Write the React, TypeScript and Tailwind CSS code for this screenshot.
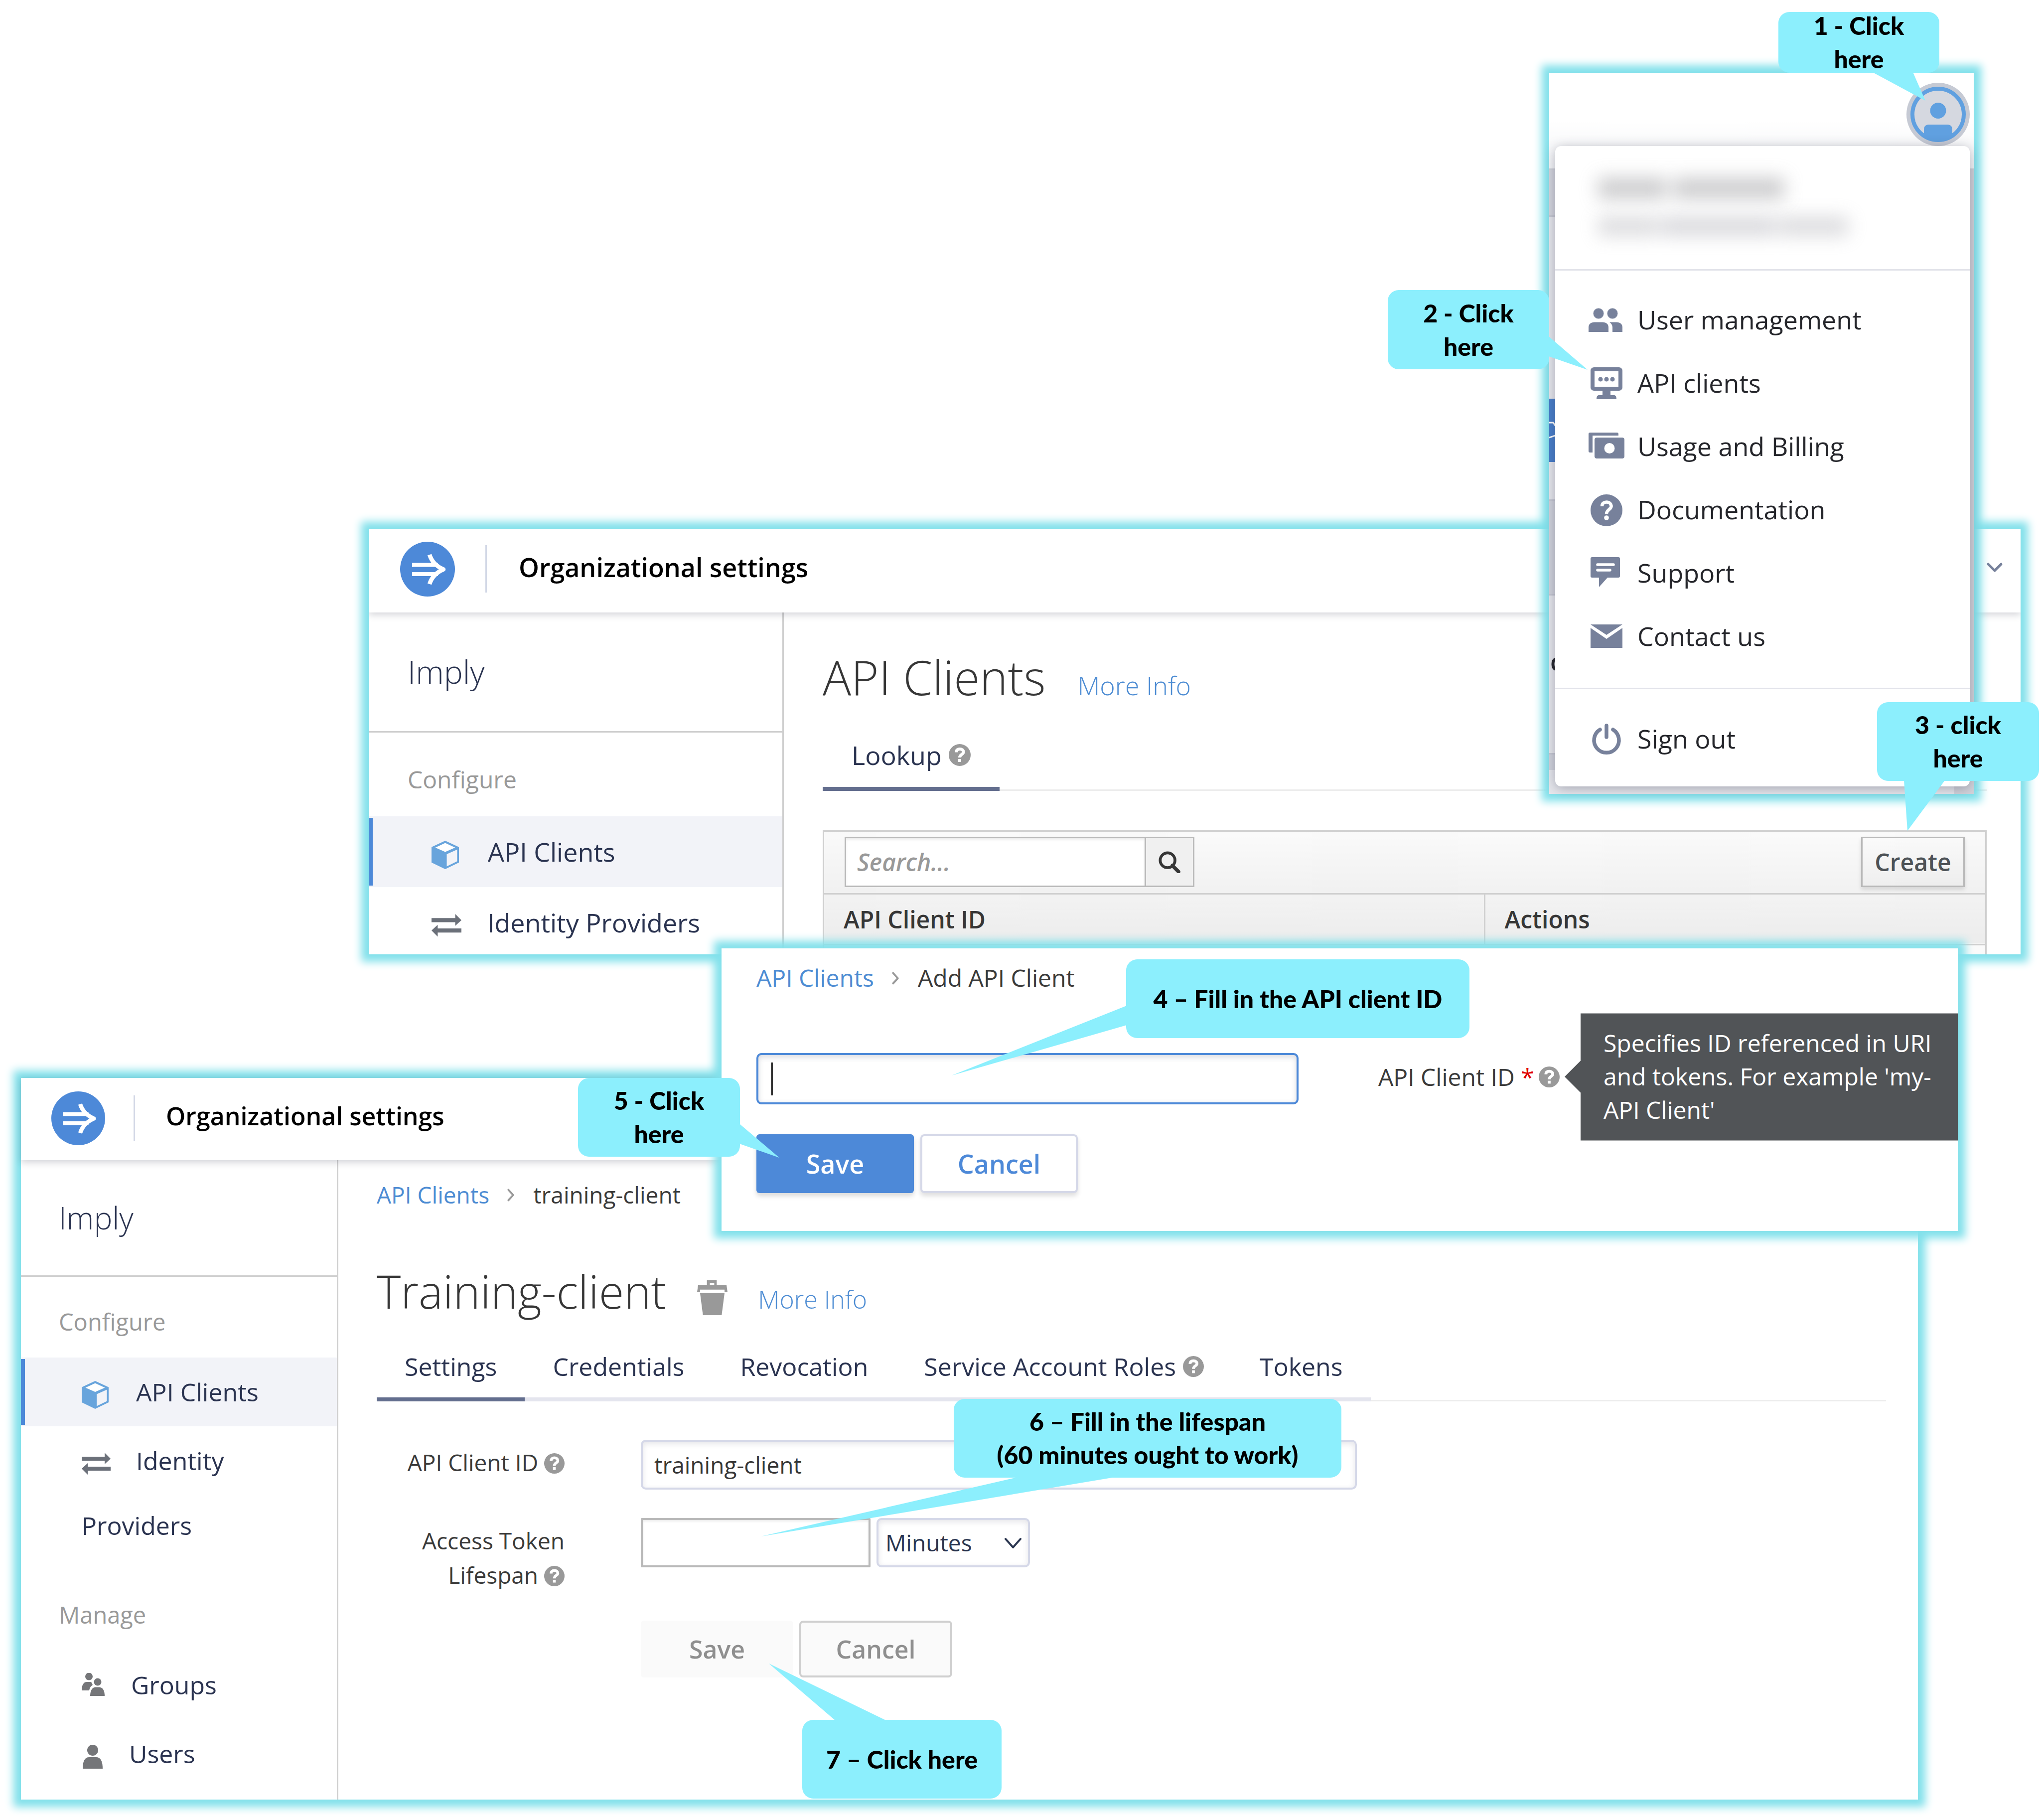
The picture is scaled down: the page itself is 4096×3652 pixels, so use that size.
import React from "react";

/* ---------- icons ---------- */

type IconProps = { className?: string };

function Logo({ className }: IconProps) {
  return (
    <svg viewBox="0 0 110 110" className={className} aria-hidden="true">
      <circle cx="55" cy="55" r="55" fill="#4d89d8" />
      <path d="M24 46.500H76M24 65H76" stroke="#fff" strokeWidth="8" fill="none" />
      <path d="M59 26C64 42 74 50 87 55.500C74 61 64 69 59 85" stroke="#fff" strokeWidth="8.500" fill="none" strokeLinejoin="round" />
    </svg>
  );
}

function CubeIcon({ className }: IconProps) {
  return (
    <svg viewBox="0 0 54 56" className={className} aria-hidden="true">
      <path d="M27 0L54 12.500V43L27 56L0 43V12.500Z" fill="#68a4dc" />
      <path d="M27 4.500L46.500 13.500L27 22L7.500 13.500Z" fill="#fff" />
      <path d="M30 26.500L50.500 17.500V40.500L30 50.500Z" fill="#f2f3f8" />
    </svg>
  );
}

function SwapIcon({ className }: IconProps) {
  return (
    <svg viewBox="0 0 58 44" className={className} aria-hidden="true">
      <path d="M0 8H46V0L58 12L46 23V16H0Z" fill="#6b7079" />
      <path d="M58 28H12V21L0 32L12 44V36H58Z" fill="#6b7079" />
    </svg>
  );
}

function GroupsIcon({ className }: IconProps) {
  return (
    <svg viewBox="0 0 46 60" className={className} aria-hidden="true">
      <g fill="#757679">
        <circle cx="14.500" cy="7" r="7.500" />
        <path d="M0 35C0 24 4 18 10 18H19L22 24C17 27 16 31 15 35Z" />
        <circle cx="32" cy="18" r="7.500" />
        <path d="M17 46C17 35 21 29.500 27 28.500H36C43 29.500 46 36 46 46Z" />
      </g>
    </svg>
  );
}

function UserIcon({ className }: IconProps) {
  return (
    <svg viewBox="0 0 40 48" className={className} aria-hidden="true">
      <g fill="#757679">
        <circle cx="20" cy="11" r="11" />
        <path d="M0 48C0 33 4 25 13 25H27C36 25 40 33 40 48Z" />
      </g>
    </svg>
  );
}

function HelpIcon({ className, fill }: IconProps & { fill: string }) {
  return (
    <svg viewBox="0 0 44 44" className={className} aria-hidden="true">
      <circle cx="22" cy="22" r="22" fill={fill} />
      <path d="M15 16.500C15 12 18 10 22 10C26.500 10 29.500 12.500 29.500 16C29.500 21 22 20.500 22 27" stroke="#fff" strokeWidth="6" fill="none" />
      <rect x="19" y="30" width="6" height="6" fill="#fff" />
    </svg>
  );
}

function TrashIcon({ className }: IconProps) {
  return (
    <svg viewBox="0 0 62 72" className={className} aria-hidden="true">
      <g fill="#999">
        <path fillRule="evenodd" d="M20 0H40V10H60L62 24H56V19H6V24H0L2 10H20ZM26 5V10H35V5Z" />
        <path d="M6 26H56L50 72H12Z" />
      </g>
    </svg>
  );
}

function SearchIcon({ className }: IconProps) {
  return (
    <svg viewBox="0 0 46 46" className={className} aria-hidden="true">
      <circle cx="19" cy="19" r="15.500" fill="none" stroke="#363636" strokeWidth="6" />
      <path d="M29 30L42 43" stroke="#363636" strokeWidth="7.500" strokeLinecap="round" />
    </svg>
  );
}

function Chevron({ className, d, color, width }: IconProps & { d: string; color: string; width: number }) {
  return (
    <svg viewBox="0 0 40 40" className={className} aria-hidden="true">
      <path d={d} fill="none" stroke={color} strokeWidth={width} strokeLinecap="round" strokeLinejoin="round" />
    </svg>
  );
}

const menuIcons: Record<string, React.ReactNode> = {
  users: (
    <g fill="#77819b">
      <circle cx="21" cy="22" r="10.500" />
      <circle cx="49" cy="22" r="10.500" />
      <path d="M1 59V50C1 43 6 39.500 13 39.500H29C36 39.500 41 43 41 50V59Z" />
      <path d="M43 39.500H57C64 39.500 69 43 69 50V59H49V50C49 46 47 42 43 39.500Z" />
    </g>
  ),
  monitor: (
    <g fill="#77819b">
      <path fillRule="evenodd" d="M12 3H62C66 3 69 6 69 10V43C69 47 66 50 62 50H12C8 50 5 47 5 43V10C5 6 8 3 12 3ZM13 11V42H61V11Z" />
      <circle cx="25" cy="27" r="4.500" />
      <circle cx="37" cy="27" r="4.500" />
      <circle cx="49" cy="27" r="4.500" />
      <path d="M29 49H45V59H52C55 59 57 61 57 67H17C17 61 19 59 22 59H29Z" />
    </g>
  ),
  billing: (
    <g fill="#77819b">
      <path d="M1 10C1 8 2 7 4 7H58C60 7 61 8 61 10V13H9V47H4C2 47 1 46 1 44Z" />
      <path fillRule="evenodd" d="M17 17H69C71 17 73 19 73 21V55C73 57 71 59 69 59H17C15 59 13 57 13 55V21C13 19 15 17 17 17ZM43 28A10.500 10.500 0 1 0 43 49A10.500 10.500 0 1 0 43 28Z" />
    </g>
  ),
  help: (
    <g>
      <circle cx="37" cy="36" r="32" fill="#77819b" />
      <path d="M28 28C28 22 32 19.500 37 19.500C42.500 19.500 46.500 23 46.500 28C46.500 34 37 35 37 43" stroke="#fff" strokeWidth="6.500" fill="none" />
      <circle cx="37" cy="51" r="4.800" fill="#fff" />
    </g>
  ),
  support: (
    <g>
      <path d="M8 3H61C63 3 64 4 64 6V41C64 43 63 44 61 44H39L22 63V44H8C6 44 5 43 5 41V6C5 4 6 3 8 3Z" fill="#77819b" />
      <path d="M19 18H51M19 29H44" stroke="#fff" strokeWidth="5.500" strokeLinecap="round" />
    </g>
  ),
  mail: (
    <g fill="#77819b">
      <path d="M5 11H69L37 32Z" />
      <path d="M5 18L37 40L69 18V58H5Z" />
    </g>
  ),
  power: (
    <g fill="none" stroke="#77819b" strokeWidth="7.500" strokeLinecap="round">
      <path d="M37 8V31" />
      <path d="M24 16A25 25 0 1 0 50 16" />
    </g>
  ),
};

/* ---------- shared parts ---------- */

function Callout({ className, tail, children }: { className: string; tail: string; children: React.ReactNode }) {
  return (
    <div
      className={`absolute z-40 flex items-center justify-center rounded-[22px] bg-[#8ceffd] text-center font-['Lato',sans-serif] text-[50px] leading-[67px] font-black text-black ${className}`}
    >
      <svg width="1" height="1" className="absolute top-0 left-0 overflow-visible" aria-hidden="true">
        <polygon points={tail} fill="#8ceffd" />
      </svg>
      <p className="relative">{children}</p>
    </div>
  );
}

const glow = "shadow-[0_0_16px_15px_#82e1eb]";

function Breadcrumbs({ current, className }: { current: string; className: string }) {
  return (
    <nav aria-label="Breadcrumb" className={`flex items-center leading-[60px] ${className}`}>
      <a href="#clients" className="text-[#4d8cd3]">
        API Clients
      </a>
      <Chevron className="mx-[25px] size-[38px]" d="M14 10L24 21L14 32" color="#999" width={4} />
      <span className="text-[#3a3a3a]">{current}</span>
    </nav>
  );
}

/* ---------- account menu window ---------- */

const menuItems = [
  ["users", "User management"],
  ["monitor", "API clients"],
  ["billing", "Usage and Billing"],
  ["help", "Documentation"],
  ["support", "Support"],
  ["mail", "Contact us"],
];

function MenuItem({ icon, label }: { icon: string; label: string }) {
  return (
    <li>
      <button type="button" className="flex h-[127px] w-full items-center gap-[25px] pl-[66px] text-[52px] text-[#25262b]">
        <svg viewBox="0 0 74 72" className="h-[72px] w-[74px]" aria-hidden="true">
          {menuIcons[icon]}
        </svg>
        <span className="pb-1">{label}</span>
      </button>
    </li>
  );
}

function AccountWindow() {
  return (
    <section className={`absolute top-[146px] right-[135px] z-20 w-[852px] bg-white ${glow}`}>
      <div className="flex flex-col overflow-hidden">
        <header className="flex h-[195px] items-start justify-end border-b-[3px] border-[#cfd1d8] bg-gradient-to-b from-white from-50% to-[#f4f5f7] pt-5 pr-2">
          <button type="button" aria-label="Account">
            <svg viewBox="0 0 127 127" className="size-[127px]" aria-hidden="true">
              <circle cx="63.500" cy="63.500" r="63.500" fill="#c6cad4" />
              <circle cx="63.500" cy="63.500" r="51.500" fill="#d5d8e0" stroke="#60a0e0" strokeWidth="8" />
              <circle cx="63.500" cy="56" r="16" fill="#60a0e0" />
              <path d="M35 103V94C35 87 39 84 46 84H81C88 84 92 87 92 94V103C84 113 74 117 63.500 117C53 117 43 113 35 103Z" fill="#60a0e0" />
            </svg>
          </button>
        </header>
        <div className="flex">
          <div className="flex-1 bg-[#e6e7ec]">
            <div className="h-[94px] border-b-[3px] border-[#c6c8d2] bg-[#d3d5dd]" />
            <div className="h-[365px]" />
            <div className="flex h-[127px] items-center bg-[#487ec9]">
              <svg viewBox="0 0 12 40" className="h-[40px] w-[12px]" aria-hidden="true">
                <path d="M0 4H8L12 10M0 34L12 30" stroke="#fff" strokeWidth="3" fill="none" />
              </svg>
            </div>
            <div className="h-[78px] border-b-[3px] border-[#c6c8d2]" />
            <div className="h-[190px] border-b-[3px] border-[#c6c8d2] bg-[#d0d2db]" />
            <div className="h-[319px] border-b-[3px] border-[#c6c8d2] pt-[102px] pl-[2px] text-[50px] leading-[60px] font-semibold text-[#25262b]">c</div>
            <div className="h-[31px] bg-[#d0d2db]" />
            <div className="h-[48px]" />
          </div>
          <div className="w-[39px] bg-[#d2d3da]" />
        </div>
      </div>

      <div className="absolute top-[147px] right-[8px] left-[12px] rounded-[12px] bg-white shadow-[0_4px_24px_rgba(40,44,70,0.35)]">
        <div className="flex h-[250px] flex-col gap-[36px] border-b-[3px] border-[#e2e3ea] pt-[64px] pl-[86px]">
          <div className="flex gap-[14px] opacity-60 blur-[18px]">
            <span className="h-[42px] w-[138px] bg-[#a9a9ac]" />
            <span className="h-[42px] w-[222px] bg-[#a9a9ac]" />
          </div>
          <div className="flex gap-[6px] opacity-45 blur-[18px]">
            <span className="h-[38px] w-[120px] bg-[#b0b0b6]" />
            <span className="h-[38px] w-[230px] bg-[#a9a9b2]" />
            <span className="h-[38px] w-[140px] bg-[#b0b0b6]" />
          </div>
        </div>
        <ul className="border-b-[3px] border-[#e2e3ea] pt-[36px] pb-[39px]">
          {menuItems.map(([icon, label]) => (
            <MenuItem key={label} icon={icon} label={label} />
          ))}
        </ul>
        <ul className="pt-[37px] pb-[31px]">
          <MenuItem icon="power" label="Sign out" />
        </ul>
      </div>
    </section>
  );
}

/* ---------- client list window ---------- */

function ClientListWindow() {
  return (
    <section className={`absolute top-[1062px] right-[41px] left-[740px] z-10 bg-white ${glow}`}>
      <div className="flex h-[853px] flex-col overflow-hidden">
        <header className="relative z-10 flex h-[167px] shrink-0 items-center pr-[32px] pb-[8px] pl-[63px] shadow-[0_4px_14px_rgba(40,44,70,0.22)]">
          <Logo className="size-[110px]" />
          <div className="ml-[61px] h-[95px] w-[3px] bg-[#d3d8e6]" />
          <h2 className="ml-[64px] pb-2 text-[52px] font-semibold text-black">Organizational settings</h2>
          <button type="button" aria-label="Open account menu" className="ml-auto pb-2">
            <Chevron className="size-[40px]" d="M7 14L20 27L33 14" color="#77819b" width={5} />
          </button>
        </header>
        <div className="flex flex-1">
          <aside className="w-[833px] shrink-0 border-r-[3px] border-[#cfcfcf] text-[#2a3350]">
            <p className="flex h-[241px] items-center border-b-[3px] border-[#cfcfcf] pl-[78px] text-[64px] font-light">Imply</p>
            <h3 className="pt-[64px] pb-[44px] pl-[78px] text-[48px] leading-[60px] text-[#999]">Configure</h3>
            <nav className="text-[52px] leading-[142px]">
              <a href="#clients" className="relative block bg-[#f2f3f8] pl-[126px]">
                <span className="absolute inset-y-[3px] left-0 w-[8px] bg-[#4d89d8]" />
                <CubeIcon className="mr-[58px] inline-block w-[55px] align-middle" />
                API Clients
              </a>
              <a href="#identity" className="block pl-[126px]">
                <SwapIcon className="mr-[52px] inline-block w-[60px] align-middle" />
                Identity Providers
              </a>
            </nav>
          </aside>
          <main className="flex-1 pt-[69px] pr-[68px] pl-[78px]">
            <div className="flex items-baseline gap-[64px] leading-[120px]">
              <h1 className="text-[95px] font-light text-[#363636]">API Clients</h1>
              <a href="#info" className="text-[52px] font-light text-[#4d8cd3]">
                More Info
              </a>
            </div>
            <div role="tablist" className="mt-[44px] flex border-b-[3px] border-[#ececec]">
              <button
                type="button"
                role="tab"
                aria-selected="true"
                className="-mb-[3px] flex items-center gap-[14px] border-b-8 border-[#636e8e] px-[58px] pb-[28px] text-[52px] leading-[72px] text-[#2a3350]"
              >
                Lookup
                <HelpIcon className="size-[44px]" fill="#999" />
              </button>
            </div>
            <div className="mt-[79px] border-[3px] border-[#cfcfcf]">
              <div className="flex items-center justify-between bg-gradient-to-b from-[#fafafa] to-[#f1f1f1] px-[41px] pt-[10px] pb-[12px]">
                <div className="flex h-[101px] w-[702px] border-[3px] border-[#b9b9b9]">
                  <input
                    aria-label="Search"
                    placeholder="Search..."
                    className="w-full min-w-0 bg-white pl-[22px] text-[48px] font-semibold italic shadow-[inset_0_3px_4px_rgba(0,0,0,0.08)] placeholder:text-[#999]"
                  />
                  <button type="button" aria-label="Search" className="flex w-[97px] shrink-0 items-center justify-center border-l-[3px] border-[#b9b9b9] bg-[#f0f0f0]">
                    <SearchIcon className="size-[44px]" />
                  </button>
                </div>
                <button
                  type="button"
                  className="h-[101px] w-[208px] border-[3px] border-[#b9b9b9] bg-gradient-to-b from-[#fafafa] to-[#eeeeee] text-[48px] font-semibold text-[#4d5256] shadow-[0_5px_8px_rgba(0,0,0,0.12)]"
                >
                  Create
                </button>
              </div>
              <table className="w-full border-t-[3px] border-[#cfcfcf] text-left text-[48px] text-[#363636]">
                <thead>
                  <tr className="h-[102px] border-b-[3px] border-[#cfcfcf] bg-gradient-to-b from-[#f3f3f3] to-[#ececec]">
                    <th scope="col" className="w-[1325px] border-r-[3px] border-[#cfcfcf] pl-[39px] font-semibold">
                      API Client ID
                    </th>
                    <th scope="col" className="pl-[39px] font-semibold">
                      Actions
                    </th>
                  </tr>
                </thead>
                <tbody>
                  <tr className="h-[99px] bg-[#fafafa]">
                    <td />
                    <td />
                  </tr>
                </tbody>
              </table>
            </div>
          </main>
        </div>
      </div>
    </section>
  );
}

/* ---------- add client window ---------- */

function AddClientWindow() {
  return (
    <section className={`absolute top-[1903px] right-[167px] left-[1448px] z-30 bg-white pt-[29px] pb-[76px] pl-[70px] ${glow}`}>
      <Breadcrumbs current="Add API Client" className="text-[48px]" />
      <form>
        <div className="mt-[121px] flex items-center">
          <div className="relative w-[1088px] shrink-0">
            <input
              id="new-client-id"
              className="h-[103px] w-full rounded-[10px] border-4 border-[#4d89d8] pl-[28px] text-[48px] text-[#363636] shadow-[inset_0_4px_12px_rgba(40,44,70,0.18)]"
            />
            <span className="absolute top-[19px] left-[29px] h-[66px] w-[4px] bg-[#363636]" />
          </div>
          <div className="relative mb-2 ml-[160px] flex flex-1 items-center text-[48px] leading-[60px] text-[#3a3a3a]">
            <label htmlFor="new-client-id">
              API Client ID <span className="text-[#e00000]">*</span>
            </label>
            <HelpIcon className="ml-[9px] size-[42px]" fill="#999" />
            <div
              role="tooltip"
              className="absolute top-1/2 right-0 left-[406px] -translate-y-1/2 bg-[#515457] pt-[25px] pr-[40px] pb-[29px] pl-[46px] leading-[67px] text-white"
            >
              <svg viewBox="0 0 32 64" className="absolute top-1/2 right-full h-[64px] w-[32px] -translate-y-1/2" aria-hidden="true">
                <path d="M32 0V64L0 32Z" fill="#515457" />
              </svg>
              Specifies ID referenced in URI and tokens. For example 'my-API Client'
            </div>
          </div>
        </div>
        <div className="mt-[60px] flex gap-[13px] text-[52px] font-semibold">
          <button type="button" className="h-[118px] w-[316px] rounded-[6px] bg-[#4d89d8] text-white shadow-[0_6px_10px_rgba(0,0,0,0.15)]">
            Save
          </button>
          <button
            type="button"
            className="h-[118px] w-[316px] rounded-[8px] border-4 border-[#d5d8e8] bg-white text-[#4d89d8] shadow-[0_6px_10px_rgba(0,0,0,0.13)]"
          >
            Cancel
          </button>
        </div>
      </form>
    </section>
  );
}

/* ---------- client settings window ---------- */

const tabs = [
  { label: "Settings", active: true },
  { label: "Credentials" },
  { label: "Revocation" },
  { label: "Service Account Roles", help: true },
  { label: "Tokens" },
];

function ClientSettingsWindow() {
  return (
    <section className={`absolute top-[2163px] right-[247px] left-[42px] bg-white ${glow}`}>
      <header className="relative z-10 flex h-[165px] items-center pb-[4px] pl-[61px] shadow-[0_4px_14px_rgba(40,44,70,0.22)]">
        <Logo className="size-[108px]" />
        <div className="ml-[57px] h-[92px] w-[3px] bg-[#d3d8e6]" />
        <h2 className="ml-[62px] pb-2 text-[50px] font-semibold text-black">Organizational settings</h2>
      </header>
      <div className="flex">
        <aside className="w-[637px] shrink-0 border-r-[3px] border-[#cfcfcf] pb-[23px] text-[#2a3350]">
          <p className="flex h-[234px] items-center border-b-[3px] border-[#cfcfcf] pl-[76px] text-[62px] font-light">Imply</p>
          <h3 className="pt-[60px] pb-[42px] pl-[76px] text-[47px] leading-[60px] text-[#999]">Configure</h3>
          <nav className="text-[50px] leading-[138px]">
            <a href="#clients" className="relative block bg-[#f2f3f8] pl-[122px]">
              <span className="absolute inset-y-[3px] left-0 w-[8px] bg-[#4d89d8]" />
              <CubeIcon className="mr-[55px] inline-block w-[54px] align-middle" />
              API Clients
            </a>
            <a href="#identity" className="block py-[4px] pr-[56px] pl-[122px] leading-[130px]">
              <SwapIcon className="mr-[51px] inline-block w-[58px] align-middle" />
              Identity Providers
            </a>
          </nav>
          <h3 className="pt-[80px] pb-[42px] pl-[76px] text-[47px] leading-[60px] text-[#999]">Manage</h3>
          <nav className="text-[50px] leading-[138px]">
            <a href="#groups" className="block pl-[122px]">
              <GroupsIcon className="mr-[53px] inline-block w-[46px] align-middle" />
              Groups
            </a>
            <a href="#users" className="block pl-[124px]">
              <UserIcon className="mr-[53px] inline-block w-[40px] align-middle" />
              Users
            </a>
          </nav>
        </aside>
        <main className="flex-1 pt-[39px] pr-[64px] pl-[77px]">
          <Breadcrumbs current="training-client" className="text-[46px]" />
          <div className="mt-[104px] flex items-baseline leading-[120px]">
            <h1 className="text-[92px] font-light text-[#363636]">Training-client</h1>
            <button type="button" aria-label="Delete client" className="ml-[62px] self-center pt-[10px]">
              <TrashIcon className="w-[61px]" />
            </button>
            <a href="#info" className="ml-[61px] text-[50px] font-light text-[#4d8cd3]">
              More Info
            </a>
          </div>
          <div role="tablist" className="mt-[40px] flex border-b-[3px] border-[#ececec] text-[50px] leading-[70px] text-[#2a3350]">
            {tabs.map((tab) => (
              <button
                key={tab.label}
                type="button"
                role="tab"
                aria-selected={!!tab.active}
                className={`-mb-[3px] flex items-center gap-[14px] border-b-8 px-[56px] pb-[27px] ${tab.active ? "border-[#636e8e]" : "border-[#e4e5ee]"}`}
              >
                {tab.label}
                {tab.help && <HelpIcon className="size-[42px]" fill="#999" />}
              </button>
            ))}
          </div>
          <form className="mt-[77px] grid grid-cols-[377px_1fr] gap-x-[153px] gap-y-[57px] text-[46px] text-[#3a3a3a]">
            <label htmlFor="client-id" className="pt-[11px] text-right leading-[69px]">
              API Client ID <HelpIcon className="mb-[6px] inline-block size-[41px] align-middle" fill="#999" />
            </label>
            <input
              id="client-id"
              defaultValue="training-client"
              className="h-[100px] w-[1437px] rounded-[10px] border-4 border-[#d5d8e8] pl-[23px] text-[#363636] shadow-[inset_0_4px_12px_rgba(40,44,70,0.12)]"
            />
            <label htmlFor="lifespan" className="pt-[11px] text-right leading-[69px]">
              Access Token Lifespan <HelpIcon className="mb-[6px] inline-block size-[41px] align-middle" fill="#999" />
            </label>
            <div className="flex gap-[12px]">
              <input
                id="lifespan"
                className="h-[99px] w-[461px] rounded-[2px] border-4 border-[#b9b9b9] shadow-[inset_0_3px_4px_rgba(0,0,0,0.08)]"
              />
              <div className="relative">
                <select
                  aria-label="Lifespan unit"
                  className="h-[99px] w-[308px] appearance-none rounded-[10px] border-4 border-[#d5d8e8] pl-[14px] text-[#2b3650] shadow-[inset_0_4px_12px_rgba(40,44,70,0.12)]"
                >
                  <option>Minutes</option>
                </select>
                <Chevron className="pointer-events-none absolute top-[30px] right-[14px] size-[40px]" d="M5 12L20 29L35 12" color="#2b3650" width={4} />
              </div>
            </div>
            <div className="col-start-2 flex gap-[12px] text-[50px] font-semibold text-[#8f8f8f]">
              <button type="button" disabled className="h-[114px] w-[306px] rounded-[6px] bg-[#fafafa]">
                Save
              </button>
              <button type="button" className="h-[114px] w-[307px] rounded-[8px] border-4 border-[#cfcfcf] bg-[#fafafa]">
                Cancel
              </button>
            </div>
          </form>
        </main>
      </div>
    </section>
  );
}

export default function App() {
  return (
    <div className="relative min-h-screen w-full overflow-hidden bg-white font-['Open_Sans',sans-serif]">
      <ClientSettingsWindow />
      <ClientListWindow />
      <AccountWindow />
      <AddClientWindow />

      <Callout className="top-[24px] right-[204px] h-[122px] w-[323px]" tail="189,121 270,121 295,178">
        1 - Click
        <br />
        here
      </Callout>
      <Callout className="top-[582px] right-[987px] h-[159px] w-[324px]" tail="323,93 323,133 401,160">
        2 - Click
        <br />
        here
      </Callout>
      <Callout className="top-[1409px] right-[4px] h-[158px] w-[325px]" tail="54,157 136,157 61,258">
        3 - click
        <br />
        here
      </Callout>
      <Callout className="top-[1925px] left-[2260px] h-[158px] w-[689px]" tail="1,93 1,132 -350,233">
        4 – Fill in the API client ID
      </Callout>
      <Callout className="top-[2163px] left-[1160px] h-[158px] w-[325px]" tail="324,92 324,132 404,160">
        5 - Click
        <br />
        here
      </Callout>
      <Callout className="top-[2807px] left-[1914px] h-[158px] w-[778px]" tail="129,157 324,157 -387,276">
        6 – Fill in the lifespan
        <br />
        (60 minutes ought to work)
      </Callout>
      <Callout className="top-[3451px] left-[1610px] h-[158px] w-[400px]" tail="66,1 168,1 -67,-113">
        7 – Click here
      </Callout>
    </div>
  );
}
